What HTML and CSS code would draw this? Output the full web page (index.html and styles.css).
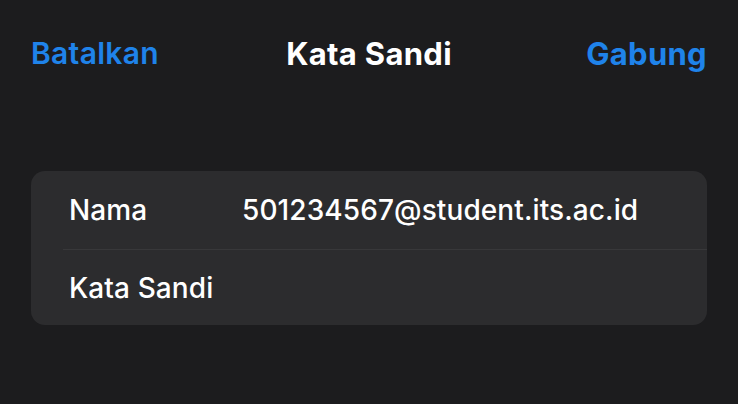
FILE: index.html
```html
<!DOCTYPE html>
<html lang="id">
<head>
<meta charset="utf-8">
<title>Kata Sandi</title>
<link rel="stylesheet" href="styles.css">
</head>
<body>
<div class="screen">
  <header class="nav">
    <span class="nav-btn nav-cancel">Batalkan</span>
    <span class="nav-title">Kata Sandi</span>
    <span class="nav-btn nav-join">Gabung</span>
  </header>
  <section class="card">
    <div class="row">
      <span class="label">Nama</span>
      <span class="value">501234567@student.its.ac.id</span>
    </div>
    <div class="sep"></div>
    <div class="row row-last">
      <span class="label">Kata Sandi</span>
      <span class="value"></span>
    </div>
  </section>
</div>
</body>
</html>
```

FILE: styles.css
```css
html, body {
  margin: 0;
  padding: 0;
  background: #1c1c1e;
}
.screen {
  width: 738px;
  height: 404px;
  font-family: Inter, "Noto Sans", sans-serif;
  color: #ffffff;
  padding: 0 31px;
  box-sizing: border-box;
}
.nav {
  height: 106px;
  display: grid;
  grid-template-columns: 1fr auto 1fr;
  align-items: center;
}
.nav-btn {
  color: #1f83ea;
  font-size: 30px;
  font-weight: 600;
  letter-spacing: 0.3px;
}
.nav-join {
  font-size: 31px;
  font-weight: 700;
  justify-self: end;
}
.nav-cancel {
  justify-self: start;
}
.nav-title {
  font-size: 31px;
  font-weight: 700;
  letter-spacing: 0.3px;
}
.card {
  margin-top: 65px;
  background: #2c2c2e;
  border-radius: 14px;
  overflow: hidden;
}
.row {
  height: 78px;
  display: flex;
  align-items: center;
  padding-left: 38px;
  font-size: 28px;
  font-weight: 500;
  letter-spacing: 0.1px;
}
.row-last {
  height: 75px;
}
.label {
  width: 173px;
  flex: none;
}
.sep {
  height: 1px;
  background: #38383a;
  margin-left: 32px;
}
```
